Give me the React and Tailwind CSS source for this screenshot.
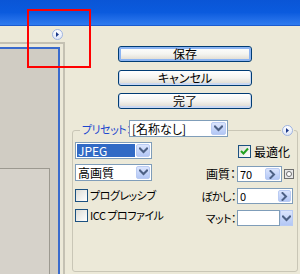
import React from "react";

const font = {
  fontFamily: '"Noto Sans CJK JP", "Noto Sans", sans-serif',
};

function Chevron({ dir = "down" }) {
  return (
    <svg width="9" height="7" viewBox="0 0 9 7" className={dir === "right" ? "rotate-[-90deg]" : ""}>
      <path d="M1 1.5 L4.5 5 L8 1.5" fill="none" stroke="#4d6185" strokeWidth="2" strokeLinecap="square" />
    </svg>
  );
}

function ArrowBtn({ dir = "down", w = "w-[15px]" }) {
  return (
    <div className={`${w} h-full shrink-0 flex items-center justify-center rounded-[2px] border border-[#b9cbf3] bg-gradient-to-b from-[#dbe5fd] to-[#b3c7f5]`}>
      <Chevron dir={dir} />
    </div>
  );
}

function CircleBtn() {
  return (
    <div className="w-[11px] h-[11px] rounded-full border border-[#9fb4e2] bg-gradient-to-b from-[#ffffff] to-[#dfe6f5] flex items-center justify-center">
      <svg width="5" height="5" viewBox="0 0 5 5">
        <path d="M1 0 L4 2.5 L1 5 Z" fill="#1d3a8a" />
      </svg>
    </div>
  );
}

function Checkbox({ checked }) {
  return (
    <div className="w-[13px] h-[13px] border border-[#1c5180] bg-gradient-to-br from-[#dcdcd7] to-[#ffffff] flex items-center justify-center shrink-0">
      {checked && (
        <svg width="9" height="9" viewBox="0 0 9 9">
          <path d="M1 4 L3.5 6.5 L8 1.5" fill="none" stroke="#21a121" strokeWidth="2" />
        </svg>
      )}
    </div>
  );
}

function XPButton({ children, primary }) {
  return (
    <div
      className={`w-[134px] h-[16px] rounded-[3px] border border-[#003c74] bg-gradient-to-b from-[#ffffff] via-[#f4f4f0] to-[#dcd7cc] flex items-center justify-center text-[12px] leading-none text-black ${
        primary ? "shadow-[inset_0_0_0_2px_#8cb4f2]" : "shadow-[inset_0_-1px_0_1px_#c9d8f3]"
      }`}
    >
      <span className="[font-feature-settings:'palt']">{children}</span>
    </div>
  );
}

export default function App() {
  return (
    <div
      className="w-[300px] h-[274px] bg-[#ece9d8] relative overflow-hidden flex flex-col text-[11px] text-black [font-feature-settings:'palt'] whitespace-nowrap"
      style={font}
    >
      {/* title bar */}
      <div className="h-[26px] shrink-0 bg-gradient-to-b from-[#0a55d6] via-[#0b5bde] to-[#2f7bef] border-b border-[#1b5bcf]" />

      <div className="flex-1 flex">
        {/* left column */}
        <div className="w-[65px] flex flex-col">
          <div className="h-[16px] pt-[3px] pl-[52px]">
            <CircleBtn />
          </div>
          <div className="flex-1 border-t-2 border-r-2 border-[#c4c1b3] pt-[3px] pr-[3px] flex flex-col">
            <div className="flex-1 border-t-2 border-r-2 border-[#3a6bcc] bg-[#d0ccc3] flex flex-col">
              <div className="h-[119px]" />
              <div className="flex-1 w-[50px] border-t border-r border-[#9c9990] bg-[#d6d2ca]" />
            </div>
          </div>
        </div>

        {/* right column */}
        <div className="flex-1 flex flex-col">
          <div className="pl-[53px] pt-[20px] flex flex-col">
            <XPButton primary>保存</XPButton>
            <div className="mt-[8px]">
              <XPButton>キャンセル</XPButton>
            </div>
            <div className="mt-[7px]">
              <XPButton>完了</XPButton>
            </div>
          </div>

          {/* group box */}
          <div className="relative ml-[7px] mt-[21px] w-[226px] flex-1 mb-[2px] border border-[#c9c6b6] rounded-[3px] flex">
            <div className="absolute left-[7px] top-[-10px] h-[16px] pl-[2px] pr-[1px] bg-[#ece9d8] flex items-center text-[#1a46cf] tracking-[-0.5px]">
              プリセット：
            </div>
            <div className="absolute left-[56px] top-[-11px] w-[99px] h-[17px] bg-white border border-[#7f9db9] flex items-center pl-[2px] pr-[1px] py-[1px]">
              <span className="flex-1 leading-none text-[12px]">[名称なし]</span>
              <ArrowBtn />
            </div>
            <div className="absolute left-[208px] top-[-6px] bg-[#ece9d8] px-[1px]">
              <CircleBtn />
            </div>

            {/* left controls */}
            <div className="w-[79px] pl-[2px] pt-[11px] flex flex-col">
              <div className="h-[17px] w-[77px] bg-white border border-[#7f9db9] flex p-[1px]">
                <div className="flex-1 bg-[#316ac5] text-white flex items-center pl-[1px] leading-none mr-[1px] text-[12px]">JPEG</div>
                <ArrowBtn w="w-[14px]" />
              </div>
              <div className="mt-[5px] h-[17px] w-[77px] bg-white border border-[#7f9db9] flex p-[1px]">
                <div className="flex-1 flex items-center pl-[1px] leading-none text-[12px]">高画質</div>
                <ArrowBtn w="w-[14px]" />
              </div>
              <div className="mt-[8px] flex items-center gap-[2px] h-[13px] leading-none">
                <Checkbox />
                <span className="tracking-[-0.5px]">プログレッシブ</span>
              </div>
              <div className="mt-[7px] flex items-center gap-[2px] h-[13px] leading-none">
                <Checkbox />
                <span className="tracking-[-0.5px]">ICC プロファイル</span>
              </div>
            </div>

            {/* right controls */}
            <div className="flex-1 pt-[14px] flex flex-col">
              <div className="flex items-center h-[13px] pl-[86px] gap-[3px] leading-none">
                <Checkbox checked />
                <span className="text-[12px]">最適化</span>
              </div>
              <div className="mt-[8px] flex items-center h-[16px]">
                <div className="w-[85px] text-right pr-[1px] leading-none text-[12px]">画質：</div>
                <div className="w-[45px] h-[16px] bg-white border border-[#7f9db9] flex p-[1px]">
                  <span className="flex-1 leading-none flex items-center pl-[1px]">70</span>
                  <ArrowBtn dir="right" />
                </div>
                <div className="ml-[2px] w-[10px] h-[10px] border border-[#6f6f6f] bg-[#e8e8e8] flex items-center justify-center">
                  <div className="w-[6px] h-[6px] rounded-full border border-[#6f6f6f] bg-white" />
                </div>
              </div>
              <div className="mt-[6px] flex items-center h-[16px]">
                <div className="w-[85px] text-right pr-[1px] leading-none tracking-[-0.5px]">ぼかし：</div>
                <div className="w-[56px] h-[16px] bg-white border border-[#7f9db9] flex p-[1px]">
                  <span className="flex-1 leading-none flex items-center pl-[1px]">0</span>
                  <ArrowBtn dir="right" w="w-[13px]" />
                </div>
              </div>
              <div className="mt-[6px] flex items-center h-[16px]">
                <div className="w-[85px] text-right pr-[1px] leading-none tracking-[-0.5px]">マット：</div>
                <div className="w-[43px] h-[16px] bg-white border border-[#7f9db9]" />
                <div className="w-[13px] h-[16px] border border-[#b9cbf3] bg-gradient-to-b from-[#dbe5fd] to-[#b3c7f5] flex items-center justify-center">
                  <Chevron />
                </div>
              </div>
            </div>
          </div>
        </div>
      </div>

      {/* red annotation rectangle */}
      <div className="absolute left-[27px] top-[9px] w-[64px] h-[59px] border-2 border-[#ff0000]" />
    </div>
  );
}
